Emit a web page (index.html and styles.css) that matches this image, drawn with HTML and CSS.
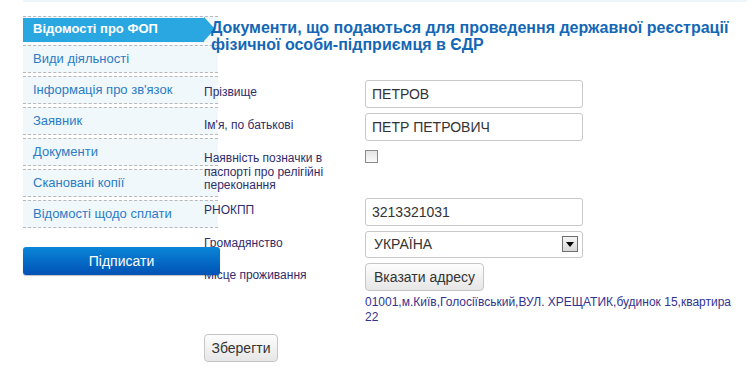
FILE: index.html
```html
<!DOCTYPE html>
<html>
    <head>
        <meta charset="utf-8">
        <title>Відомості про ФОП</title>
        <link rel="stylesheet" href="styles.css">
    </head>
    <body>
        <div class="topbar"></div>
        <div class="page">
            <div class="side">
                <ul class="menu">
                    <li class="active">Відомості про ФОП</li>
                    <li>Види діяльності</li>
                    <li>Інформація про зв'язок</li>
                    <li>Заявник</li>
                    <li>Документи</li>
                    <li>Скановані копії</li>
                    <li>Відомості щодо сплати</li>
                </ul>
                <div class="sign">Підписати</div>
            </div>
            <div class="main">
                <h1>Документи, що подаються для проведення державної реєстрації фізичної особи-підприємця в ЄДР</h1>
                <div class="form">
                    <div class="label">Прізвище</div>
                    <div class="field"><div class="input">ПЕТРОВ</div></div>

                    <div class="label">Ім'я, по батькові</div>
                    <div class="field"><div class="input">ПЕТР ПЕТРОВИЧ</div></div>

                    <div class="label">Наявність позначки в паспорті про релігійні переконання</div>
                    <div class="field"><span class="check"></span></div>

                    <div class="label">РНОКПП</div>
                    <div class="field"><div class="input">3213321031</div></div>

                    <div class="label">Громадянство</div>
                    <div class="field">
                        <div class="input select">
                            <span class="sel-text">УКРАЇНА</span>
                            <span class="arrow">
                                <svg width="8" height="5" viewBox="0 0 8 5"><path d="M0 0h8L4 5z" fill="#000"/></svg>
                            </span>
                        </div>
                    </div>

                    <div class="label">Місце проживання</div>
                    <div class="field">
                        <div class="btn addr-btn">Вказати адресу</div>
                        <div class="address">01001,м.Київ,Голосіївський,ВУЛ. ХРЕЩАТИК,будинок 15,квартира 22</div>
                    </div>
                </div>
                <div class="btn save">Зберегти</div>
            </div>
        </div>
    </body>
</html>
```

FILE: styles.css
```css
*{
    margin:            0;
    padding:           0;
    box-sizing:        border-box;
}
body{
    background:        #fff;
    font-family:       Arial, "Liberation Sans", sans-serif;
}
.topbar{
    height:            2px;
    margin:            0 8px 0 23px;
    background:        #eef5fb;
}
.page{
    display:           flex;
    align-items:       flex-start;
    padding:           14px 0 0 23px;
}
.side{
    width:             195px;
    flex:              none;
}
.menu{
    list-style:        none;
}
.menu li{
    height:            28px;
    line-height:       26px;
    margin-bottom:     3px;
    padding-left:      10px;
    font-size:         13px;
    color:             #2a7cc6;
    background:        #f1f8fc;
    border-top:        1px dashed #b8b8b8;
    border-bottom:     1px dashed #b8b8b8;
}
.menu li.active{
    height:            27px;
    margin-bottom:     2px;
    color:             #fff;
    font-weight:       bold;
    background:        linear-gradient(to right, #2aa7e0, #2aa7e0) no-repeat 0 1px / 181px 25px, #f1f8fc;
    border-bottom:     1px solid #f1f8fc;
    position:          relative;
    line-height:       24px;
}
.menu li.active:after{
    content:           "";
    position:          absolute;
    left:              181px;
    top:               0;
    border-left:       11px solid #2aa7e0;
    border-top:        12.5px solid transparent;
    border-bottom:     12.5px solid transparent;
}
.sign{
    position:          relative;
    z-index:           3;
    margin-top:        19px;
    width:             197px;
    height:            28px;
    line-height:       28px;
    text-align:        center;
    color:             #fff;
    font-size:         14px;
    border-radius:     3px;
    background:        linear-gradient(#0a86d8, #0052b4);
    box-shadow:        0 1px 1px rgba(0,0,0,.25);
}
.main{
    position:          relative;
    z-index:           2;
    margin-left:       -14px;
    flex:              1;
}
h1{
    margin:            3px 0 0 7px;
    font-size:         16px;
    line-height:       17px;
    color:             #1467b5;
}
.form{
    display:           grid;
    grid-template-columns: 161px 1fr;
    row-gap:           5px;
    margin-top:        27px;
}
.label{
    padding-top:       6px;
    width:             140px;
    font-size:         12px;
    line-height:       13.5px;
    color:             #2f2d6b;
}
.input{
    width:             218px;
    height:            28px;
    line-height:       26px;
    padding:           0 6px;
    border:            1px solid #c9c9c9;
    border-radius:     3px;
    font-size:         14px;
    color:             #333;
    background:        #fff;
}
.select{
    display:           flex;
    align-items:       center;
    justify-content:   space-between;
    height:            27px;
    padding:           0 4px 0 8px;
}
.arrow{
    width:             16px;
    height:            16px;
    border:            1px solid #6f6f6f;
    background:        linear-gradient(#f4f4f4, #d8d8d8);
    display:           flex;
    align-items:       center;
    justify-content:   center;
}
.check{
    display:           block;
    width:             13px;
    height:            13px;
    margin-top:        4px;
    border:            1px solid #8a8a8a;
    background:        linear-gradient(#e4e4e4, #fafafa);
}
.btn{
    display:           inline-block;
    height:            28px;
    line-height:       26px;
    text-align:        center;
    white-space:       nowrap;
    font-size:         14px;
    color:             #333;
    border:            1px solid #c6c6c6;
    border-radius:     4px;
    background:        linear-gradient(#fdfdfd, #e6e6e6);
}
.addr-btn{
    width:             119px;
}
.address{
    margin-top:        4px;
    width:             378px;
    font-size:         12px;
    line-height:       15px;
    color:             #33338f;
}
.save{
    margin-top:        9px;
    width:             74px;
}
```
